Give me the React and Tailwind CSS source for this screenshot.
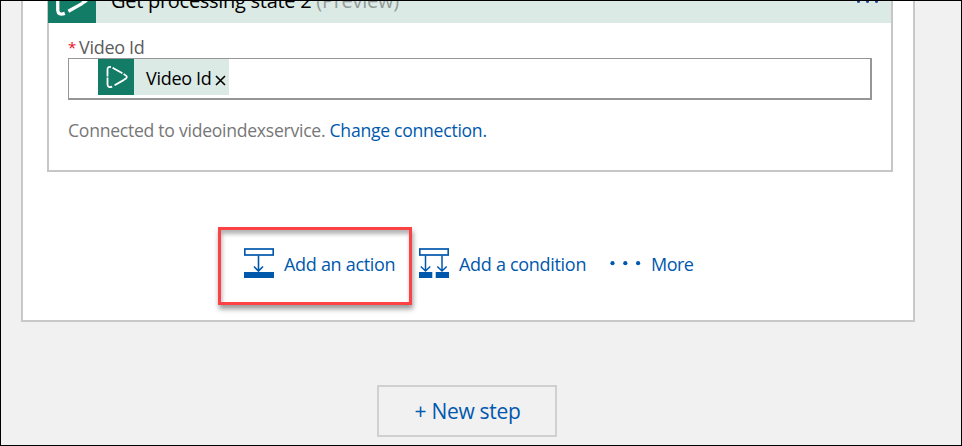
function VideoIndexerMark({ className, strokeWidth = 1.8 }) {
  return (
    <svg className={className} viewBox="0 0 22 24" fill="none" stroke="white" strokeWidth={strokeWidth}>
      <path d="M1.5 11.5V4.5Q1.6 1.4 5 2" />
      <path d="M6.6 2.8L16.4 8.2" />
      <path d="M17.6 9L20 10.6Q21.6 12 20 13.4L17.8 14.7" />
      <path d="M1.5 12.6V19.5Q1.8 23.2 6.2 21.6" />
      <path d="M8.6 20.2L18 14.9" />
    </svg>
  );
}

function ActionIcon() {
  return (
    <svg className="h-[30px] w-[30px] shrink-0" viewBox="0 0 30 30" fill="none" stroke="#0058ad">
      <rect x="0.75" y="1" width="28.5" height="6" strokeWidth="1.7" />
      <path d="M14.5 7.5V23M10 18.5L14.5 23L19 18.5" strokeWidth="1.6" />
      <rect x="0" y="24" width="30" height="6" fill="#0058ad" stroke="none" />
    </svg>
  );
}

function ConditionIcon() {
  return (
    <svg className="h-[30px] w-[30px] shrink-0" viewBox="0 0 30 30" fill="none" stroke="#0058ad">
      <rect x="0.75" y="1" width="28.5" height="6" strokeWidth="1.7" />
      <path d="M6.5 7.5V23M1.8 18.5L6.5 23L11.2 18.5M23 7.5V23M18.3 18.5L23 23L27.7 18.5" strokeWidth="1.5" />
      <path d="M0 24h13.3v6H0zM16.7 24H30v6H16.7z" fill="#0058ad" stroke="none" />
    </svg>
  );
}

function Dots() {
  return (
    <svg className="h-[6px] w-[31px] shrink-0" viewBox="0 0 31 6" fill="#0058ad">
      <circle cx="2.5" cy="2.2" r="2.1" />
      <circle cx="15.3" cy="2.2" r="2.1" />
      <circle cx="28.1" cy="2.2" r="2.1" />
    </svg>
  );
}

export default function App() {
  return (
    <div className="flex h-[446px] w-[962px] flex-col overflow-hidden border border-black bg-[#f1f1f1] font-['Open_Sans','Noto_Sans',sans-serif] text-[18px] leading-[24px] tracking-[-0.3px]">
      <main className="ml-5 h-[321px] w-[894px] shrink-0 border-2 border-t-0 border-[#c8c8c8] bg-white">
        <section className="ml-6 h-[171px] w-[846px] border-2 border-t-0 border-[#c6c6c6]">
          <header className="-ml-px flex h-[22px] items-end overflow-hidden bg-[#dceae6]">
            <div className="flex h-12 w-12 shrink-0 items-center justify-center bg-[#127c66]">
              <VideoIndexerMark className="h-9 w-[34px]" strokeWidth={2.2} />
            </div>
            <h1 className="ml-[15px] h-[37px] text-[20px] leading-[30px] tracking-[-0.28px] whitespace-pre text-black">
              Get processing state 2 <span className="text-[#929b9a]">(Preview)</span>
            </h1>
            <div className="mr-[13px] mb-[20px] ml-auto flex gap-[6px]">
              <i className="size-[3px] rounded-full bg-[#24489a]" />
              <i className="size-[3px] rounded-full bg-[#24489a]" />
              <i className="size-[3px] rounded-full bg-[#24489a]" />
            </div>
          </header>
          <div className="pl-[19px]">
            <label className="mt-[13px] flex h-[22px] items-center whitespace-pre text-[#5c5c5c]">
              <span className="w-[11px] text-[15px] text-[#e81123]">*</span>Video Id
            </label>
            <div className="flex h-[42px] w-[804px] border border-r-2 border-b-2 border-[#969696] pl-[29px]">
              <div className="flex h-9 w-[131px] items-center bg-[#dceae6] text-black">
                <span className="flex h-9 w-9 shrink-0 items-center justify-center bg-[#127c66] pl-px">
                  <VideoIndexerMark className="h-6 w-[22px]" />
                </span>
                <span className="ml-3 w-[69px] shrink-0 pt-[2px] whitespace-pre">Video Id</span>
                <svg className="mt-[7px] h-[11px] w-[11px] shrink-0" viewBox="0 0 11 11" stroke="black" strokeWidth="1.6">
                  <path d="M1 1L10 10M10 1L1 10" />
                </svg>
              </div>
            </div>
            <p className="mt-[18px] text-[17.6px] tracking-[-0.27px] whitespace-pre text-[#777]">
              Connected to videoindexservice. <a className="text-[#0058ad]">Change connection.</a>
            </p>
          </div>
        </section>

        <nav className="mt-[55px] ml-[195px] flex h-[78px] items-center text-[#0058ad]">
          <button className="flex h-[78px] w-[194px] shrink-0 items-center border-3 border-[#fc4245] pl-[23px] shadow-[1px_4px_5px_rgba(0,0,0,0.4),inset_1px_4px_4px_rgba(0,0,0,0.3)]">
            <span className="flex items-center gap-[10px] pb-[6px] whitespace-pre">
              <ActionIcon />
              <span className="pt-[2px]">Add an action</span>
            </span>
          </button>
          <button className="ml-[7px] flex w-[191px] shrink-0 items-center gap-[10px] pb-[6px] whitespace-pre">
            <ConditionIcon />
            <span className="pt-[2px]">Add a condition</span>
          </button>
          <button className="flex items-center gap-[10px] pb-[5px] tracking-[-0.5px] whitespace-pre">
            <Dots />
            More
          </button>
        </nav>
      </main>
      <button className="mt-[63px] ml-[376px] h-[52px] w-[180px] shrink-0 border-2 border-[#d0d0d0] pl-px text-[21px] whitespace-pre text-[#0058ad]">
        + New step
      </button>
    </div>
  );
}
